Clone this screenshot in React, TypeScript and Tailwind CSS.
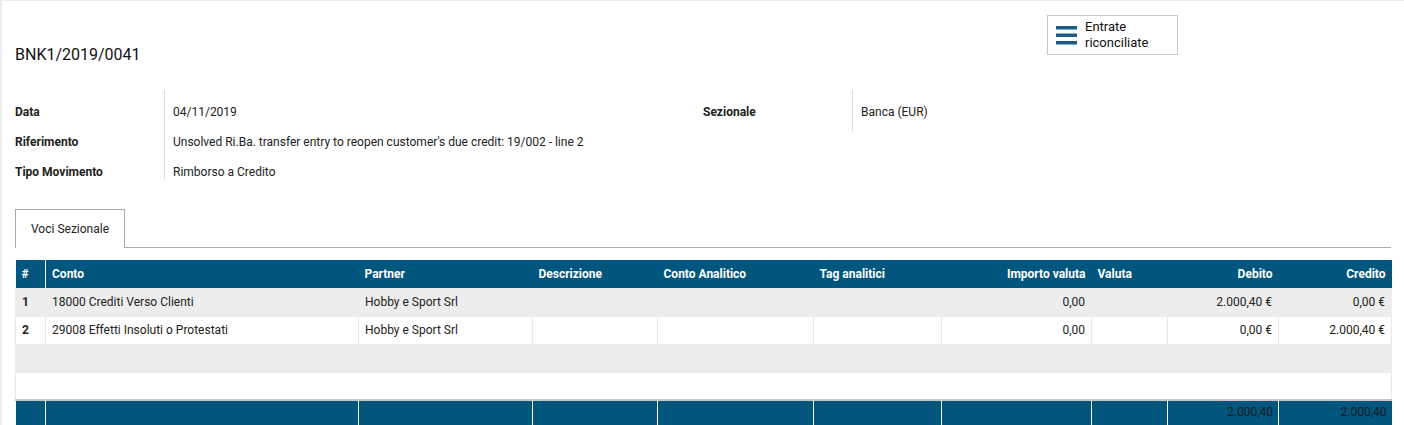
import React from "react";

type Line = {
  n: string;
  conto: string;
  partner: string;
  importo: string;
  debito: string;
  credito: string;
};

const lines: Line[] = [
  {
    n: "1",
    conto: "18000 Crediti Verso Clienti",
    partner: "Hobby e Sport Srl",
    importo: "0,00",
    debito: "2.000,40 €",
    credito: "0,00 €",
  },
  {
    n: "2",
    conto: "29008 Effetti Insoluti o Protestati",
    partner: "Hobby e Sport Srl",
    importo: "0,00",
    debito: "0,00 €",
    credito: "2.000,40 €",
  },
];

const widths = [30, 313, 174, 125, 156, 128, 150, 76, 111, 113];

const MenuIcon = () => (
  <svg width="21" height="19" viewBox="0 0 21 19" className="shrink-0">
    <rect x="0" y="0" width="21" height="3.5" fill="#1b5a86" />
    <rect x="0" y="7.5" width="21" height="3.5" fill="#1b5a86" />
    <rect x="0" y="15" width="21" height="3.5" fill="#1b5a86" />
  </svg>
);

const FieldRow = ({ children, bold }: { children: React.ReactNode; bold?: boolean }) => (
  <div className={"h-[30px] pt-[14px] leading-[16px] whitespace-nowrap " + (bold ? "font-bold" : "")}>
    {children}
  </div>
);

export default function App() {
  return (
    <div
      className="w-[1404px] h-[425px] overflow-hidden bg-white border-t border-l-2 border-[#ececec] pl-[13px] pr-[13px] text-[12px] text-[#222]"
      style={{ fontFamily: "Roboto, 'Liberation Sans', sans-serif" }}
    >
      {/* header */}
      <div className="flex items-start pt-[14px]">
        <div className="flex-1 mt-[28px] text-[16px] leading-[24px] text-[#111]">BNK1/2019/0041</div>
        <button className="w-[131px] h-[40px] flex items-center gap-[8px] pl-[8px] border border-[#c8c8c8] bg-white text-left mr-[213px]">
          <MenuIcon />
          <span className="text-[13px] leading-[16px] text-[#111]">
            Entrate
            <br />
            riconciliate
          </span>
        </button>
      </div>

      {/* fields */}
      <div className="flex mt-[23px]">
        <div className="w-[688px] flex">
          <div className="w-[150px] border-r border-[#ddd]">
            <FieldRow bold>Data</FieldRow>
            <FieldRow bold>Riferimento</FieldRow>
            <FieldRow bold>Tipo Movimento</FieldRow>
          </div>
          <div className="pl-[8px]">
            <FieldRow>04/11/2019</FieldRow>
            <FieldRow>Unsolved Ri.Ba. transfer entry to reopen customer's due credit: 19/002 - line 2</FieldRow>
            <FieldRow>Rimborso a Credito</FieldRow>
          </div>
        </div>
        <div className="flex items-start">
          <div className="w-[150px] h-[42px] border-r border-[#ddd]">
            <FieldRow bold>Sezionale</FieldRow>
          </div>
          <div className="pl-[8px]">
            <FieldRow>Banca (EUR)</FieldRow>
          </div>
        </div>
      </div>

      {/* tabs */}
      <div className="flex mt-[29px] border-b border-[#aaa]">
        <div className="-mb-px h-[39px] px-[15px] pt-[10px] leading-[18px] border border-b-0 border-[#aaa] bg-white">
          Voci Sezionale
        </div>
      </div>

      {/* table */}
      <table className="mt-[12px] table-fixed border-collapse w-[1376px]">
        <colgroup>
          {widths.map((w, i) => (
            <col key={i} style={{ width: w }} />
          ))}
        </colgroup>
        <thead>
          <tr className="h-[28px] bg-[#01567e] text-white font-bold text-left">
            <th className="px-[6px] border-r border-white">#</th>
            <th className="px-[6px]">Conto</th>
            <th className="px-[6px]">Partner</th>
            <th className="px-[6px]">Descrizione</th>
            <th className="px-[6px]">Conto Analitico</th>
            <th className="px-[6px]">Tag analitici</th>
            <th className="px-[6px] text-right">Importo valuta</th>
            <th className="px-[6px]">Valuta</th>
            <th className="px-[6px] text-right">Debito</th>
            <th className="px-[6px] text-right">Credito</th>
          </tr>
        </thead>
        <tbody>
          {lines.map((l, i) => {
            const b = i % 2 === 0 ? "border border-[#ededed]" : "border border-[#e9e9e9]";
            return (
              <tr key={l.n} className={"h-[28px] " + (i % 2 === 0 ? "bg-[#ededed]" : "bg-white")}>
                <td className={"px-[6px] font-bold " + b}>{l.n}</td>
                <td className={"px-[6px] " + b}>{l.conto}</td>
                <td className={"px-[6px] " + b}>{l.partner}</td>
                <td className={"px-[6px] " + b}></td>
                <td className={"px-[6px] " + b}></td>
                <td className={"px-[6px] " + b}></td>
                <td className={"px-[6px] text-right " + b}>{l.importo}</td>
                <td className={"px-[6px] " + b}></td>
                <td className={"px-[6px] text-right " + b}>{l.debito}</td>
                <td className={"px-[6px] text-right " + b}>{l.credito}</td>
              </tr>
            );
          })}
          <tr className="h-[28px] bg-[#ededed]">
            <td colSpan={10} className="border border-[#ededed]"></td>
          </tr>
          <tr className="h-[28px] bg-white">
            <td colSpan={10} className="border border-[#e9e9e9]"></td>
          </tr>
        </tbody>
        <tfoot>
          <tr className="h-[28px] bg-[#01567e] text-[#1a1a1a] border-t-2 border-[#c8c8c8]">
            <td className="border-r border-white"></td>
            <td className="border-r border-white"></td>
            <td className="border-r border-white"></td>
            <td className="border-r border-white"></td>
            <td className="border-r border-white"></td>
            <td className="border-r border-white"></td>
            <td className="border-r border-white"></td>
            <td className="border-r border-white"></td>
            <td className="px-[5px] pt-[2px] align-top text-right border-r border-white">2.000,40</td>
            <td className="px-[5px] pt-[2px] align-top text-right">2.000,40</td>
          </tr>
        </tfoot>
      </table>
    </div>
  );
}
